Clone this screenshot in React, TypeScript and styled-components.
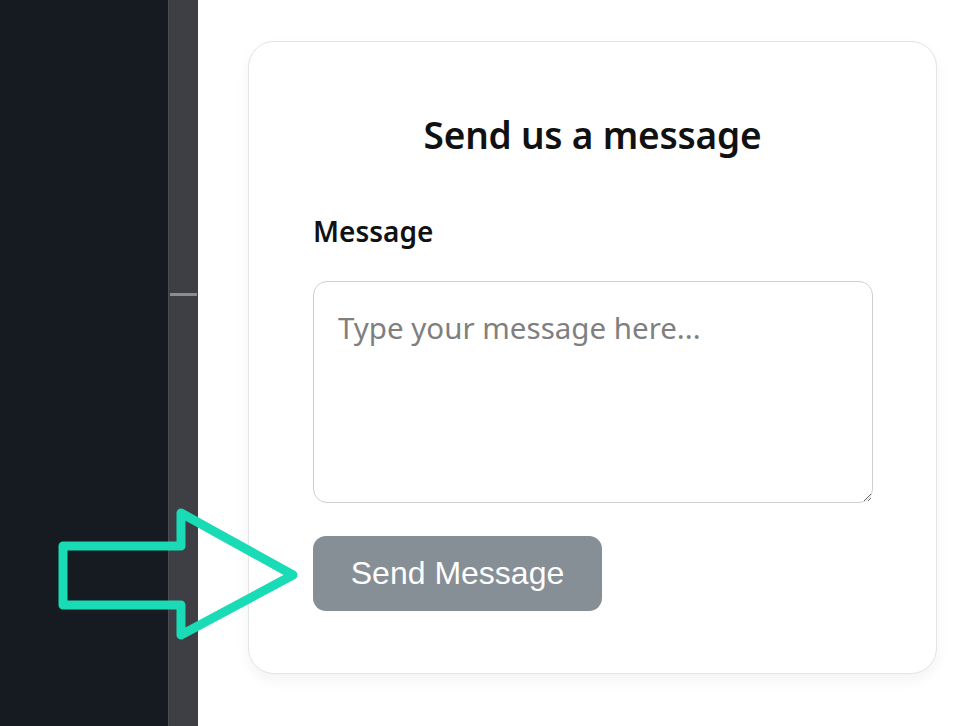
import React from "react";
import styled, { createGlobalStyle } from "styled-components";

const GlobalStyle = createGlobalStyle`
  html, body {
    margin: 0;
    padding: 0;
    background: #ffffff;
  }
  body {
    font-family: "Noto Sans", "Open Sans", sans-serif;
  }
`;

const App: React.FC = () => {
  return (
    <Page>
      <GlobalStyle />
      <Sidebar />
      <Splitter>
        <SplitterHandle />
      </Splitter>
      <Main>
        <Card>
          <Title>Send us a message</Title>
          <Label htmlFor="message">Message</Label>
          <MessageBox id="message" placeholder="Type your message here..." />
          <SendButton type="button">Send Message</SendButton>
        </Card>
      </Main>
      <Pointer width="250" height="140" viewBox="0 0 250 140">
        <path
          d="M8 39 L126 39 L126 6 L238 68 L126 128 L126 98 L8 98 Z"
          fill="none"
          stroke="#19dbb5"
          strokeWidth="9"
          strokeLinejoin="round"
        />
      </Pointer>
    </Page>
  );
};

const Page = styled.div`
  position: relative;
  display: flex;
  width: 976px;
  height: 726px;
  overflow: hidden;
`;

const Sidebar = styled.div`
  width: 168px;
  flex-shrink: 0;
  background: #161a21;
`;

const Splitter = styled.div`
  width: 30px;
  flex-shrink: 0;
  background: #3e3f44;
  border-left: 1px solid #4a4c52;
  box-sizing: border-box;
  padding-top: 293px;
`;

const SplitterHandle = styled.div`
  height: 3px;
  margin: 0 1px;
  background: #8a8c91;
`;

const Main = styled.div`
  flex: 1;
  background: #ffffff;
  padding: 41px 0 0 50px;
`;

const Card = styled.div`
  box-sizing: border-box;
  width: 689px;
  height: 633px;
  border: 1px solid #e4e4e4;
  border-radius: 26px;
  background: #ffffff;
  box-shadow: 0 6px 14px rgba(0, 0, 0, 0.05);
  padding: 70px 64px 0 64px;
  display: flex;
  flex-direction: column;
  align-items: flex-start;
`;

const Title = styled.h2`
  align-self: stretch;
  margin: 0 0 55px;
  text-align: center;
  font-size: 37px;
  line-height: 46px;
  font-weight: 600;
  color: #111111;
  letter-spacing: -0.2px;
`;

const Label = styled.label`
  font-size: 28px;
  line-height: 36px;
  font-weight: 600;
  color: #111111;
  margin-bottom: 32px;
`;

const MessageBox = styled.textarea`
  box-sizing: border-box;
  width: 560px;
  height: 222px;
  border: 1.5px solid #cfcfcf;
  border-radius: 14px;
  padding: 28px 24px;
  font-family: "Noto Sans", "Open Sans", sans-serif;
  font-size: 29.5px;
  line-height: 36px;
  color: #333333;
  resize: vertical;
  outline: none;

  &::placeholder {
    color: #7f7f7f;
  }
`;

const SendButton = styled.button`
  margin-top: 33px;
  width: 289px;
  height: 75px;
  border: none;
  border-radius: 13px;
  background: #868e96;
  color: #ffffff;
  font-family: "Liberation Sans", Arial, sans-serif;
  font-size: 32px;
  cursor: pointer;
`;

const Pointer = styled.svg`
  position: absolute;
  left: 55px;
  top: 507px;
  pointer-events: none;
`;

export default App;
